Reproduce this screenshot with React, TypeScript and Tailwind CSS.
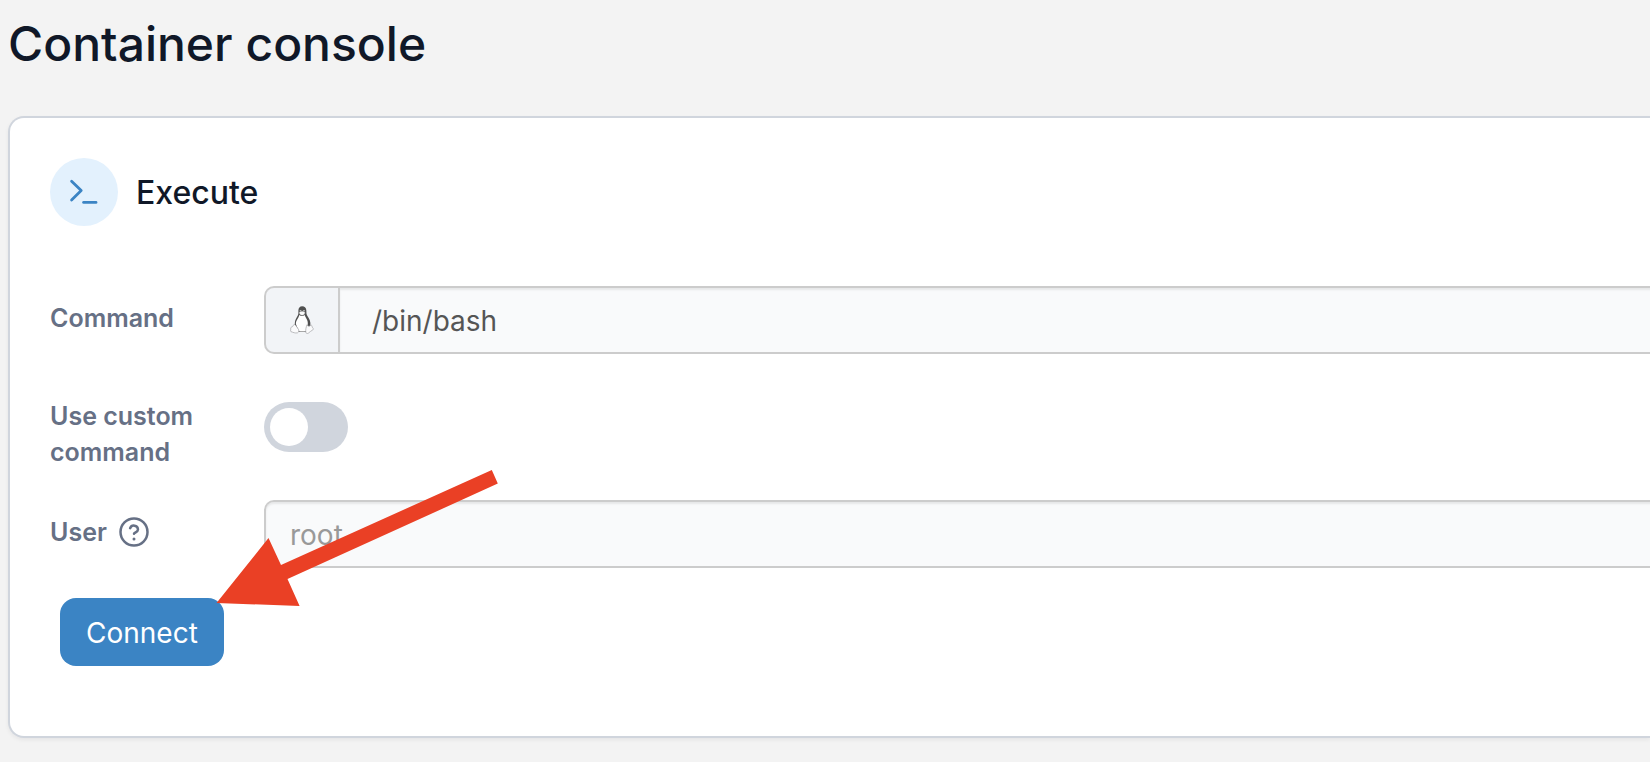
import { useState } from "react";

function TerminalIcon() {
  return (
    <svg width="32" height="32" viewBox="0 0 32 32" fill="none" stroke="#3b84c4" strokeWidth="2.8" strokeLinecap="round" strokeLinejoin="round" aria-hidden="true">
      <path d="M3.600 5.200 13.200 14.600 3.600 24" />
      <path d="M15.600 26.400H28" />
    </svg>
  );
}

function PenguinIcon() {
  return (
    <svg width="24" height="28" viewBox="0 0 24 28" aria-hidden="true">
      <path
        d="M12.200.2c-2.400 0-3.800 1.700-3.800 4.200 0 2 .2 3.400-.5 4.900-.8 1.800-2.200 3.700-2.800 5.800-.3 1.500-.3 2.800-.3 4l2.200 7h10.600l2.500-5.500c.7-2.500.3-5.400-.9-7.700-1-2-2.400-3.200-2.700-5.200-.2-1.300 0-2.500-.2-3.800C15.900 1.500 14.600.2 12.200.2Z"
        fill="#505050"
      />
      <path
        d="M9.300 9c1.500 1.300 3.900 1.300 5.400 0 .5 2.100 2.200 3.700 2.800 6.100.4 1.400.4 2.800.2 4l-1.900 6.100c-2 .5-5 .5-7 0L5.900 18c-.1-3.600 2.600-5.400 3.400-9Z"
        fill="#fff"
      />
      <path d="M9.200 6.300c1.800-1.500 4.100-1.500 5.800 0-.1 2-1.300 3-2.900 3S9.300 8.200 9.200 6.300Z" fill="#fafafa" stroke="#a0a0a0" strokeWidth=".4" />
      <path d="M9.700 4.700h1.600M13.200 4.700h1.600" stroke="#b8b8b8" strokeWidth="1.200" />
      <path
        d="M4.400 18.500c1.200.2 2.700 3.100 4 4.700.8 1.500.6 2.800-.9 3.600-2.100.7-4.600-.5-6.600-1.200-.8-.6.1-2.200-.2-3.300-.1-1.200 1.300-1.200 2-1.800.6-.6.7-2.200 1.700-2Z"
        fill="#fbfbfc"
        stroke="#a3a3a6"
        strokeWidth=".7"
      />
      <path
        d="M17 18.800c.6 1.800 2.800 1.800 4.200.2.900.4.700 1.900 1.300 2.700.9.700 1.300 1.300.4 2.100-1.500 1-3.200 2.100-4.600 3.400-1.100.6-2.200.3-2.500-.9-.3-2.500.2-5 1.200-7.500Z"
        fill="#fbfbfc"
        stroke="#a3a3a6"
        strokeWidth=".7"
      />
    </svg>
  );
}

function HelpIcon() {
  return (
    <svg width="30" height="30" viewBox="0 0 30 30" fill="none" stroke="#667085" strokeWidth="2.500" strokeLinecap="round" strokeLinejoin="round" aria-hidden="true">
      <circle cx="15" cy="15" r="13.500" />
      <path d="M11.100 11.200a4.100 4.100 0 0 1 7.900 1.300c0 2.600-4 3.300-4 4.300" />
      <path d="M15 21.900h.01" strokeWidth="3" />
    </svg>
  );
}

const labelClass = "w-[214px] shrink-0 pr-10 text-[25px] leading-9 font-semibold text-[#667085]";
const fieldClass =
  "-mr-2 h-[68px] min-w-0 flex-1 border-2 border-r-0 border-[#ccc] bg-[#f9fafb] text-[28px] text-[#555] shadow-[inset_0_2px_2px_rgba(0,0,0,0.075)] outline-none";

export default function App() {
  const [custom, setCustom] = useState(false);
  const [command, setCommand] = useState("/bin/bash");
  const [user, setUser] = useState("");

  return (
    <div className="min-h-screen overflow-x-hidden bg-[#f3f3f3] pt-4 pb-6 pl-2 font-['Inter',sans-serif]">
      <h1 className="text-[48px] leading-[56px] font-medium text-[#101828]">Container console</h1>

      <main className="relative mt-11 rounded-l-2xl border-2 border-r-0 border-[#d0d5dd] bg-white pt-10 pb-[70px] pl-10 shadow-[0_2px_4px_rgba(16,24,40,0.06)]">
        <header className="flex items-center gap-[18px]">
          <span className="flex size-[68px] items-center justify-center rounded-full bg-[#e3f1fd]">
            <TerminalIcon />
          </span>
          <h2 className="pt-[2px] text-[32px] leading-10 font-medium text-[#101828]">Execute</h2>
        </header>

        <form onSubmit={(e) => e.preventDefault()}>
          <div className="mt-[60px] flex items-start">
            <label htmlFor="command" className={`${labelClass} pt-[14px]`}>
              Command
            </label>
            <div className="flex min-w-0 flex-1">
              <span className="flex w-[74px] shrink-0 items-center justify-center rounded-l-[10px] border-2 border-r-0 border-[#ccc] bg-[#f2f4f7]">
                <PenguinIcon />
              </span>
              <select id="command" value={command} onChange={(e) => setCommand(e.target.value)} className={`${fieldClass} appearance-none pt-[2px] pl-8`}>
                <option>/bin/bash</option>
                <option>/bin/sh</option>
                <option>/bin/ash</option>
              </select>
            </div>
          </div>

          <div className="mt-11 flex items-start">
            <label htmlFor="custom" className={labelClass}>
              Use custom command
            </label>
            <input
              id="custom"
              type="checkbox"
              role="switch"
              checked={custom}
              onChange={(e) => setCustom(e.target.checked)}
              className="mt-1 flex h-[50px] w-[84px] cursor-pointer appearance-none items-center rounded-full bg-[#d0d5dd] px-[6px] before:size-[38px] before:rounded-full before:bg-white before:content-[''] checked:justify-end checked:bg-[#3b84c4]"
            />
          </div>

          <div className="mt-[30px] flex items-start">
            <div className={`${labelClass} flex items-center gap-3 pt-[14px]`}>
              <label htmlFor="user">User</label>
              <HelpIcon />
            </div>
            <input
              id="user"
              type="text"
              placeholder="root"
              value={user}
              onChange={(e) => setUser(e.target.value)}
              className={`${fieldClass} rounded-l-[10px] pt-[2px] pl-6 placeholder:text-[#999]`}
            />
          </div>

          <button type="submit" className="mt-[30px] ml-[10px] block h-[68px] cursor-pointer rounded-2xl bg-[#3b84c4] px-[26px] pt-[2px] text-[28px] text-white">
            Connect
          </button>
        </form>

        <svg className="pointer-events-none absolute top-[350px] left-[204px]" width="286" height="142" viewBox="214 468 286 142" aria-hidden="true">
          <path d="M216.500 603 268.500 538 281 565 491.800 470 497.800 483.600 287.500 579 299.600 606Z" fill="#ea4025" />
        </svg>
      </main>
    </div>
  );
}
